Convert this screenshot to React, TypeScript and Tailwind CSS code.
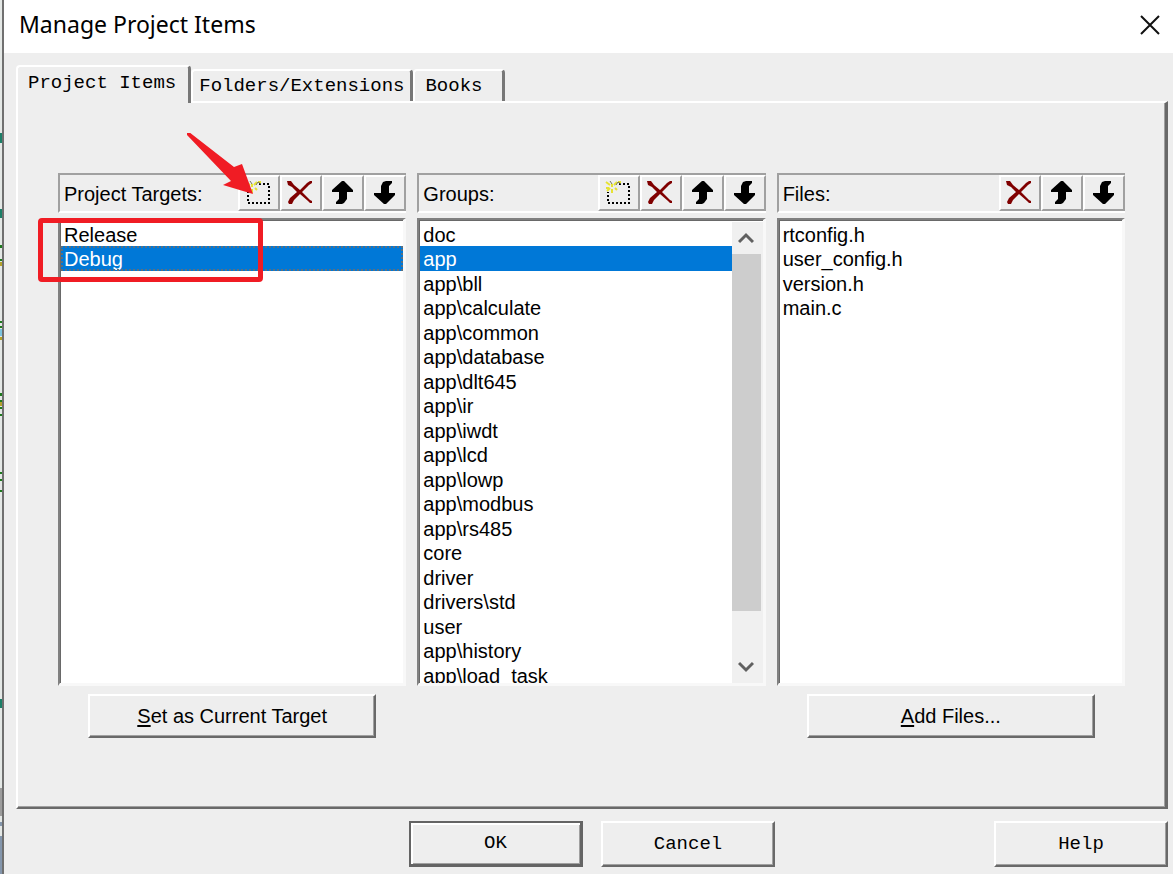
import { useState, type ReactNode } from "react";

const tabs = ["Project Items", "Folders/Extensions", "Books"];

const targets = ["Release", "Debug"];

const groups = [
  "doc",
  "app",
  "app\\bll",
  "app\\calculate",
  "app\\common",
  "app\\database",
  "app\\dlt645",
  "app\\ir",
  "app\\iwdt",
  "app\\lcd",
  "app\\lowp",
  "app\\modbus",
  "app\\rs485",
  "core",
  "driver",
  "drivers\\std",
  "user",
  "app\\history",
  "app\\load_task",
];

const files = ["rtconfig.h", "user_config.h", "version.h", "main.c"];

function NewIcon() {
  return (
    <svg width="28" height="28" viewBox="0 0 28 28" aria-hidden="true">
      <path
        d="M15 5h10v19H4V13"
        fill="none"
        stroke="#000"
        strokeWidth="2"
        strokeDasharray="2 2"
      />
      <path
        d="M8 5v3M8 10v4M2 9h3M2 3l4 3M13 3l-3 3M3 12l3-3M11 9l2 2M14 3h3"
        stroke="#e6e232"
        strokeWidth="2"
      />
      <path d="M6 2l2 3M12 6l2-3 3 2" fill="none" stroke="#77775a" strokeWidth="1" />
    </svg>
  );
}

function DeleteIcon() {
  return (
    <svg width="28" height="28" viewBox="0 0 28 28" aria-hidden="true">
      <path
        d="M1 2h4l3 4 6 5 7-7 3-2h2v2l-3 2-7 7 8 8 2 1v2h-2l-2-2-8-7-6 6-2 4H3l-1-2 2-4 7-6-5-5-4-2z"
        fill="#800000"
      />
    </svg>
  );
}

function UpIcon() {
  return (
    <svg width="28" height="28" viewBox="0 0 28 28" aria-hidden="true">
      <path d="M14 2h2l9 9v2h-6v7l-3 4-2 1H8v-2l3-3v-7H4v-2z" fill="#000" />
    </svg>
  );
}

function DownIcon() {
  return (
    <svg width="28" height="28" viewBox="0 0 28 28" aria-hidden="true">
      <path d="M14 25h2l9-9v-2h-6V7l3-3V2h-6l-3 1-2 4v7H4v2z" fill="#000" />
    </svg>
  );
}

const tools = {
  New: <NewIcon />,
  Delete: <DeleteIcon />,
  "Move up": <UpIcon />,
  "Move down": <DownIcon />,
};

type Tool = keyof typeof tools;

function Toolbar({ title, items }: { title: string; items: Tool[] }) {
  return (
    <div className="flex h-10 items-end border-t-2 border-b-2 border-l-2 border-t-[#a0a0a0] border-b-white border-l-[#a0a0a0]">
      <h2 className="flex-1 self-center pt-0.5 pl-1">{title}</h2>
      {items.map((item) => (
        <button
          key={item}
          type="button"
          aria-label={`${item} (${title.replace(":", "")})`}
          className="flex h-9 w-[42px] items-center justify-center border-2 border-t-white border-r-[#a0a0a0] border-b-[#a0a0a0] border-l-white pr-0.5"
        >
          {tools[item]}
        </button>
      ))}
    </div>
  );
}

interface ListProps {
  label: string;
  items: string[];
  initial?: string;
  focused?: boolean;
  scroll?: boolean;
}

function ListBox({ label, items, initial, focused, scroll }: ListProps) {
  const [selected, setSelected] = useState(initial);

  return (
    <div className="mt-[5px] flex h-[468px] border-t-2 border-r-3 border-b-3 border-l-2 border-t-[#808080] border-r-[#f8f8f8] border-b-[#f8f8f8] border-l-[#808080] bg-white pt-0.5 pl-px shadow-[inset_1px_1px_#696969]">
      <ul role="listbox" aria-label={label} className="flex-1 overflow-hidden">
        {items.map((item) => (
          <li
            key={item}
            role="option"
            aria-selected={item === selected}
            onClick={() => setSelected(item)}
            className={
              item === selected
                ? `h-6 bg-[#0078d7] px-[3px] leading-[26px] text-white even:h-[25px] ${
                    focused ? "outline-2 -outline-offset-2 outline-dotted outline-[#5a6f80]" : ""
                  }`
                : "h-6 px-[3px] leading-[26px] even:h-[25px]"
            }
          >
            {item}
          </li>
        ))}
      </ul>
      {scroll && (
        <div className="flex w-[31px] flex-col bg-[#f0f0f0] pr-0.5">
          <button type="button" aria-label="Scroll up" className="flex h-8 items-center justify-center">
            <svg width="16" height="14" viewBox="0 0 16 14">
              <path d="M1 11l7-7 7 7" fill="none" stroke="#606060" strokeWidth="3" />
            </svg>
          </button>
          <div className="flex-1">
            <div className="h-[90%] bg-[#cdcdcd]" />
          </div>
          <button type="button" aria-label="Scroll down" className="flex h-8 items-center justify-center">
            <svg width="16" height="14" viewBox="0 0 16 14">
              <path d="M1 3l7 7 7-7" fill="none" stroke="#606060" strokeWidth="3" />
            </svg>
          </button>
        </div>
      )}
    </div>
  );
}

function PushButton({ children }: { children: ReactNode }) {
  return (
    <button
      type="button"
      className="mx-[30px] mt-2 h-11 border-2 border-t-white border-r-[#696969] border-b-[#696969] border-l-white shadow-[inset_-1px_-1px_#a0a0a0]"
    >
      {children}
    </button>
  );
}

function DialogButton({ label, primary }: { label: string; primary?: boolean }) {
  return (
    <button
      type="button"
      className={
        primary
          ? "h-[46px] w-[174px] border-t-2 border-r-3 border-b-3 border-l-2 border-[#646464] font-['Liberation_Mono',monospace] text-[19px] shadow-[inset_2px_2px_#fff,inset_-1px_-1px_#a0a0a0]"
          : "h-[46px] w-[174px] border-2 border-t-white border-r-[#696969] border-b-[#696969] border-l-white font-['Liberation_Mono',monospace] text-[19px] shadow-[inset_-1px_-1px_#a0a0a0]"
      }
    >
      {label}
    </button>
  );
}

// Red arrow and frame drawn over the targets column
function Callout() {
  return (
    <div className="pointer-events-none">
      <svg
        className="absolute -top-10 left-[129px]"
        width="72"
        height="64"
        viewBox="0 0 72 64"
        aria-hidden="true"
      >
        <path d="M0 0l2-1 45 35 8-3 11 30-30-9 8-4L0 2z" fill="#f01c24" />
      </svg>
      <div className="absolute top-[45px] -left-5 h-[64px] w-[225px] rounded-sm border-[5px] border-[#f01c24]" />
    </div>
  );
}

// Strip of the editor window that shows beside the dialog
function EditorEdge() {
  return (
    <div className="relative w-1 shrink-0 border-r-2 border-[#707070] bg-[#e4e8e6]">
      <svg className="absolute top-0 left-0" width="2" height="874" viewBox="0 0 2 874" aria-hidden="true">
        <path d="M1 133v10M1 209v9M1 699v9" stroke="#1c8068" strokeWidth="2" />
        <path
          d="M1 245v3M1 259v2M1 321v2M1 326v2M1 393v3M1 400v2M1 407v2M1 414v2M1 472v2M1 479v2M1 490v2"
          stroke="#1d7a1d"
          strokeWidth="2"
        />
        <path d="M1 262v4M1 337v3M1 402v4" stroke="#b3a12a" strokeWidth="2" />
        <path d="M1 329v7" stroke="#7cc4e0" strokeWidth="2" />
        <path d="M1 788v28" stroke="#9c9c9c" strokeWidth="2" />
        <path d="M1 822v4M1 836v38" stroke="#8496ac" strokeWidth="2" />
      </svg>
    </div>
  );
}

export default function App() {
  const [active, setActive] = useState(tabs[0]);

  return (
    <div className="flex min-h-screen bg-[#eee] font-['Liberation_Sans',Arial,sans-serif] text-xl text-black">
      <EditorEdge />
      <main className="min-w-0 flex-1">
        <header className="flex h-[53px] items-center justify-between bg-white pr-3 pl-[15px]">
          <h1 className="pb-1 font-['Noto_Sans','Open_Sans',sans-serif] text-[23px]">
            Manage Project Items
          </h1>
          <button type="button" aria-label="Close" className="pb-1">
            <svg width="22" height="22" viewBox="0 0 22 22">
              <path d="M2 2l18 18M20 2L2 20" stroke="#111" strokeWidth="2" />
            </svg>
          </button>
        </header>

        <div className="pt-3 pr-[5px] pl-3">
          <div role="tablist" className="flex h-9 items-end">
            {tabs.map((tab) => (
              <button
                key={tab}
                type="button"
                role="tab"
                aria-selected={tab === active}
                onClick={() => setActive(tab)}
                className={
                  tab === active
                    ? "relative -mb-0.5 h-[38px] rounded-t-sm border-t-2 border-r-3 border-l-2 border-t-white border-r-[#777] border-l-white bg-[#eee] pr-3 pb-1 pl-2.5 font-['Liberation_Mono',monospace] text-[19px]"
                    : "h-8 rounded-t-sm border-t-2 border-r-3 border-l-2 border-t-white border-r-[#777] border-l-white px-1.5 font-['Liberation_Mono',monospace] text-[19px] last:pr-5 last:pl-2.5"
                }
              >
                {tab}
              </button>
            ))}
          </div>

          <section className="grid grid-cols-3 gap-x-[11px] border-t-2 border-r-3 border-b-2 border-l-2 border-t-white border-r-[#696969] border-b-[#696969] border-l-white px-10 pt-[70px] pb-[69px] shadow-[inset_-1px_-1px_#a0a0a0]">
            <div className="relative flex flex-col">
              <Toolbar title="Project Targets:" items={["New", "Delete", "Move up", "Move down"]} />
              <ListBox label="Project Targets" items={targets} initial="Debug" focused />
              <PushButton>
                <span className="underline underline-offset-2">S</span>et as Current Target
              </PushButton>
              <Callout />
            </div>
            <div className="flex flex-col">
              <Toolbar title="Groups:" items={["New", "Delete", "Move up", "Move down"]} />
              <ListBox label="Groups" items={groups} initial="app" scroll />
            </div>
            <div className="flex flex-col">
              <Toolbar title="Files:" items={["Delete", "Move up", "Move down"]} />
              <ListBox label="Files" items={files} />
              <PushButton>
                <span className="underline underline-offset-2">A</span>dd Files...
              </PushButton>
            </div>
          </section>

          <footer className="flex gap-[18px] pt-3 pb-1.5">
            <div className="flex-1" />
            <DialogButton label="OK" primary />
            <DialogButton label="Cancel" />
            <div className="flex flex-1 justify-end">
              <DialogButton label="Help" />
            </div>
          </footer>
        </div>
      </main>
    </div>
  );
}
